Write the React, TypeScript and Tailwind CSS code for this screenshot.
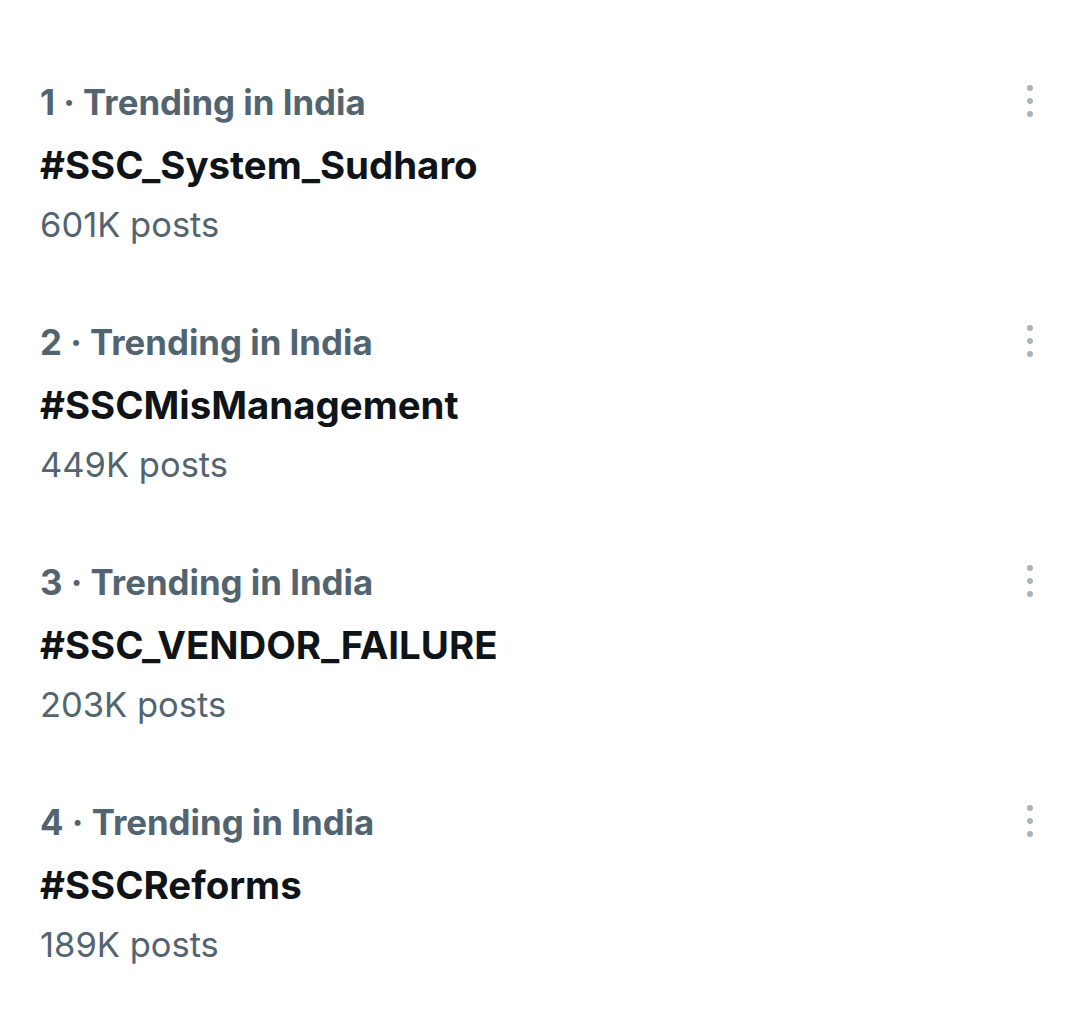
import React from "react";

type Trend = { rank: number; place: string; tag: string; posts: string };

const TRENDS: Trend[] = [
  { rank: 1, place: "India", tag: "#SSC_System_Sudharo", posts: "601K posts" },
  { rank: 2, place: "India", tag: "#SSCMisManagement", posts: "449K posts" },
  { rank: 3, place: "India", tag: "#SSC_VENDOR_FAILURE", posts: "203K posts" },
  { rank: 4, place: "India", tag: "#SSCReforms", posts: "189K posts" },
];

function MoreDots() {
  return (
    <button type="button" className="flex flex-col items-center gap-[7px] pt-[13px] w-[24px]">
      <span className="block w-[6px] h-[6px] rounded-full bg-[#aab4bc]" />
      <span className="block w-[6px] h-[6px] rounded-full bg-[#aab4bc]" />
      <span className="block w-[6px] h-[6px] rounded-full bg-[#aab4bc]" />
    </button>
  );
}

function TrendRow({ trend }: { trend: Trend }) {
  return (
    <div className="flex items-start justify-between pl-[40px] pr-[38px] pt-[28px] pb-[29px]">
      <div className="flex flex-col">
        <div className="text-[34.8px] leading-[60px] font-bold text-[#536471]">
          {trend.rank} · Trending in {trend.place}
        </div>
        <div className="mt-[3px] text-[38.4px] leading-[60px] font-bold text-[#0f1419]">
          {trend.tag}
        </div>
        <div className="text-[34.5px] leading-[60px] text-[#536471]">{trend.posts}</div>
      </div>
      <MoreDots />
    </div>
  );
}

export default function App() {
  return (
    <div
      className="w-[1080px] h-[1009px] bg-white overflow-hidden"
      style={{ fontFamily: "Inter, 'Noto Sans', sans-serif" }}
    >
      <div className="pt-[44px]">
        {TRENDS.map((t) => (
          <TrendRow key={t.rank} trend={t} />
        ))}
      </div>
    </div>
  );
}
